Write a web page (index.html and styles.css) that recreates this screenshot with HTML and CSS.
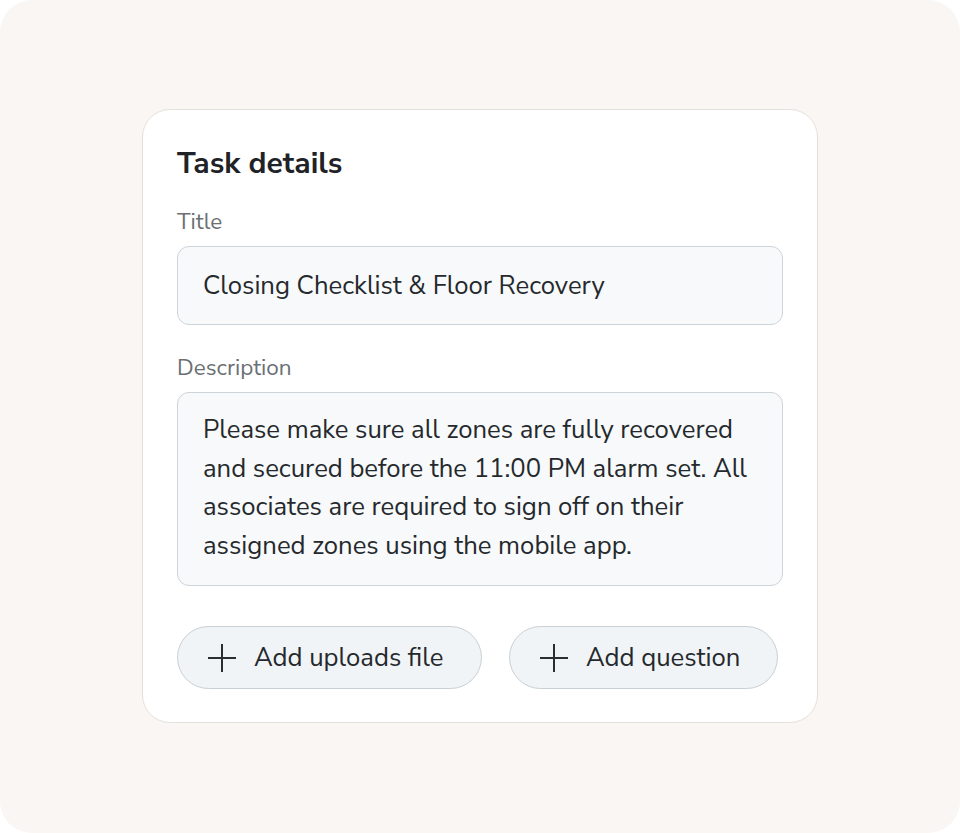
FILE: index.html
```html
<!DOCTYPE html>
<html>
<head>
<meta charset="utf-8">
<link rel="stylesheet" href="styles.css">
</head>
<body>
<div class="page">
  <div class="card">
    <h1 class="heading">Task details</h1>
    <div class="field">
      <div class="label">Title</div>
      <div class="input">Closing Checklist &amp; Floor Recovery</div>
    </div>
    <div class="field">
      <div class="label">Description</div>
      <div class="textarea">Please make sure all zones are fully recovered and secured before the 11:00 PM alarm set. All associates are required to sign off on their assigned zones using the mobile app.</div>
    </div>
    <div class="actions">
      <button class="btn btn-upload"><svg class="plus" viewBox="0 0 30 30" width="30" height="30"><path d="M15 1v28M1 15h28" stroke="#2a2e33" stroke-width="2" fill="none"/></svg><span>Add uploads file</span></button>
      <button class="btn btn-question"><svg class="plus" viewBox="0 0 30 30" width="30" height="30"><path d="M15 1v28M1 15h28" stroke="#2a2e33" stroke-width="2" fill="none"/></svg><span>Add question</span></button>
    </div>
  </div>
</div>
</body>
</html>
```
FILE: styles.css
```css
* { box-sizing: border-box; }
html, body { margin: 0; padding: 0; background: #ffffff; }
body {
  font-family: "Nunito Sans", "Open Sans", "Noto Sans", sans-serif;
  color: #2a2e33;
}
.page {
  width: 960px;
  height: 833px;
  background: #f9f6f3;
  border-radius: 32px;
  padding-top: 109px;
  padding-left: 142px;
}
.card {
  width: 676px;
  height: 614px;
  background: #ffffff;
  border: 1px solid #e6e0da;
  border-radius: 28px;
  padding: 34px 34px 0 34px;
}
.heading {
  margin: 0;
  font-size: 30px;
  font-weight: 700;
  color: #1f2327;
  line-height: 40px;
}
.field { margin-top: 23px; }
.field + .field { margin-top: 28px; }
.label {
  font-size: 22.5px;
  color: #6b7075;
  line-height: 30px;
  margin-bottom: 9px;
}
.input {
  height: 79px;
  width: 606px;
  background: #f7f9fa;
  border: 1px solid #ccd4d9;
  border-radius: 12px;
  padding: 0 25px;
  display: flex;
  align-items: center;
  font-size: 25.7px;
  color: #25292d;
}
.textarea {
  width: 606px;
  height: 194px;
  background: #f7f9fa;
  border: 1px solid #ccd4d9;
  border-radius: 12px;
  padding: 18px 25px;
  font-size: 25.7px;
  line-height: 38.5px;
  color: #25292d;
}
.actions {
  display: flex;
  gap: 27px;
  margin-top: 40px;
}
.btn {
  height: 63px;
  border: 1px solid #c8d0d5;
  background: #f1f4f6;
  border-radius: 32px;
  display: flex;
  align-items: center;
  gap: 17px;
  padding: 0 0 0 29px;
  font-family: inherit;
  font-size: 25.7px;
  color: #25292d;
  cursor: pointer;
}
.btn-upload { width: 305px; }
.btn-question { width: 269px; }
.plus { flex: none; }
```
